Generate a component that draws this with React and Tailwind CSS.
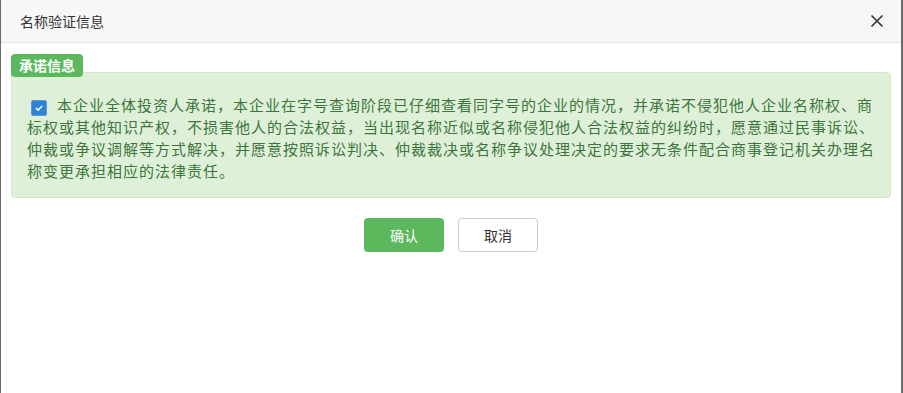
export default function App() {
  return (
    <div className="h-[393px] w-[903px] bg-[#6b6b6b] pl-[1px] pr-[2px] overflow-hidden">
      <div
        className="h-full bg-white flex flex-col"
        style={{ fontFamily: '"Noto Sans CJK SC", "Liberation Sans", sans-serif' }}
      >
        {/* Header */}
        <div className="h-[43px] shrink-0 bg-[#f7f7f7] border-b border-[#e6e6e6] flex items-center justify-between pl-[19px] pr-[17px]">
          <span className="text-[14px] text-[#333]">名称验证信息</span>
          <svg width="14" height="14" viewBox="0 0 14 14" className="text-[#333]">
            <path d="M1.5 1.5 L12.5 12.5 M12.5 1.5 L1.5 12.5" stroke="currentColor" strokeWidth="1.6" />
          </svg>
        </div>

        {/* Body */}
        <div className="px-[10px] pt-[11px]">
          <div className="flex flex-col">
            <div className="w-[72px] h-[23px] flex items-center justify-center bg-[#5cb85c] text-white text-[14px] font-bold rounded-[4px] relative z-10 -mb-[5px]">
              承诺信息
            </div>
            <div className="bg-[#dff0d8] border border-[#d3e8c9] rounded-[4px] pt-[21px] pb-[15px] pl-[15px] pr-[14px] text-[15px] leading-[22px] tracking-[1px] text-[#3c763d]">
              <span className="inline-flex items-center justify-center w-[16px] h-[16px] rounded-[2px] bg-[#2f83d4] border border-[#5a9be0] align-[-2px] ml-[4px] mr-[10px]">
                <svg width="10" height="10" viewBox="0 0 10 10">
                  <path d="M2 5.2 L4.2 7.2 L8 3" stroke="white" strokeWidth="1.6" fill="none" />
                </svg>
              </span>
              本企业全体投资人承诺，本企业在字号查询阶段已仔细查看同字号的企业的情况，并承诺不侵犯他人企业名称权、商标权或其他知识产权，不损害他人的合法权益，当出现名称近似或名称侵犯他人合法权益的纠纷时，愿意通过民事诉讼、仲裁或争议调解等方式解决，并愿意按照诉讼判决、仲裁裁决或名称争议处理决定的要求无条件配合商事登记机关办理名称变更承担相应的法律责任。
            </div>
          </div>
        </div>

        {/* Buttons */}
        <div className="flex justify-center gap-[14px] mt-[20px]">
          <button className="w-[80px] h-[34px] rounded-[4px] bg-[#5cb85c] text-white text-[14px]">确认</button>
          <button className="w-[80px] h-[34px] rounded-[4px] bg-white border border-[#ccc] text-[#333] text-[14px]">取消</button>
        </div>
      </div>
    </div>
  );
}
